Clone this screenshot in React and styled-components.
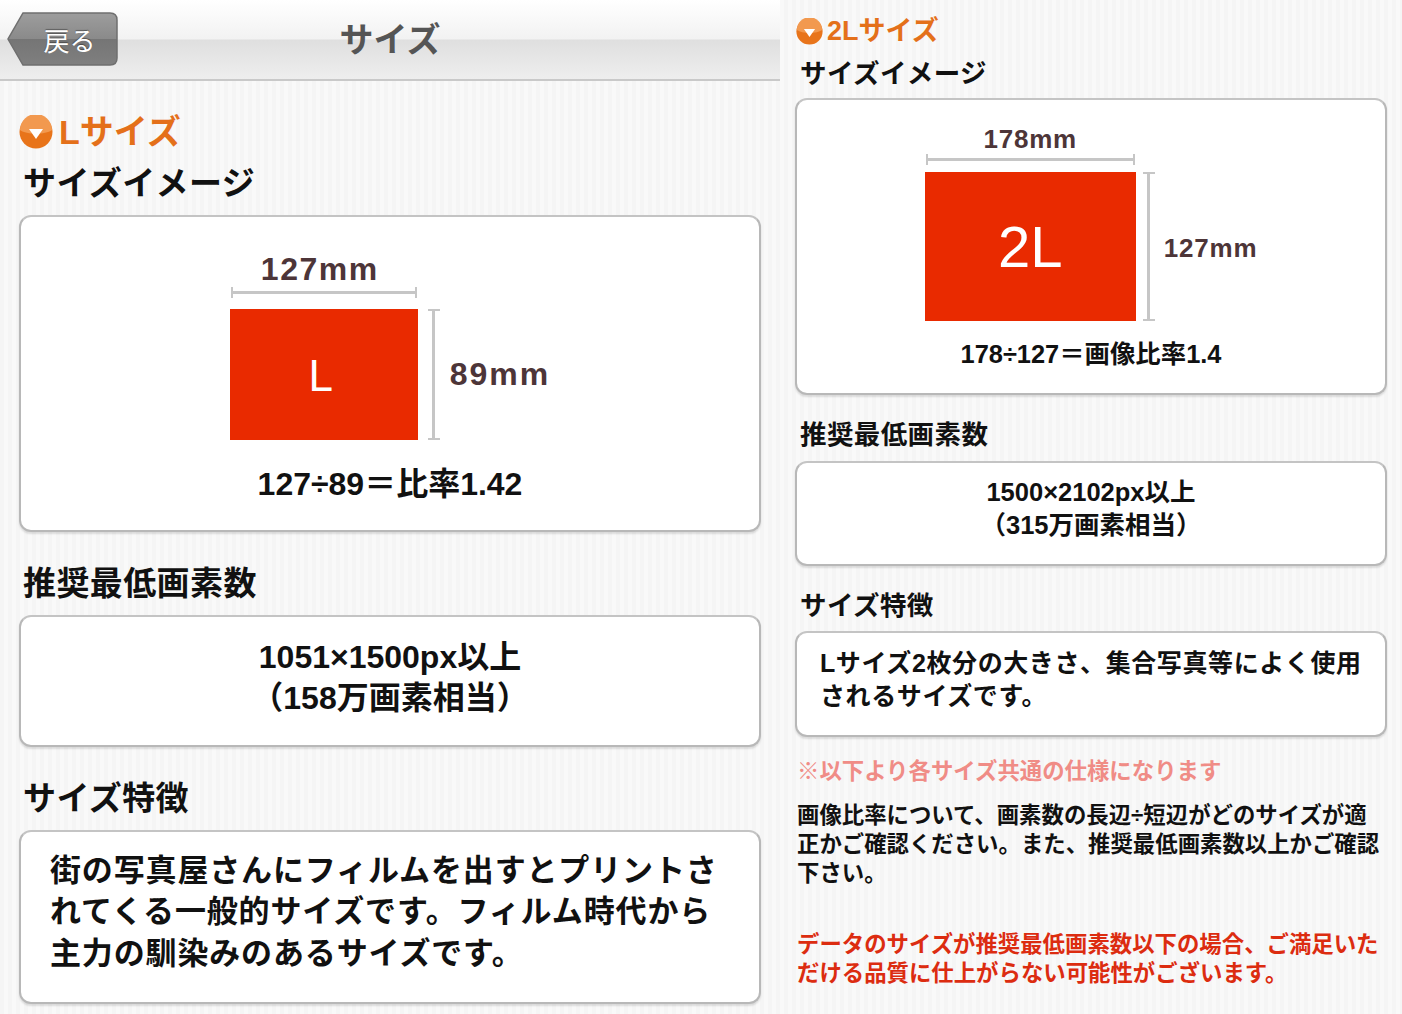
import React from "react";
import styled, { createGlobalStyle } from "styled-components";

const FONT = '"Liberation Sans", "Noto Sans CJK JP", sans-serif';

const GlobalStyle = createGlobalStyle`
  html, body {
    margin: 0;
    padding: 0;
    background: #f7f7f7;
  }
  body {
    font-family: ${FONT};
    color: #111;
  }
`;

const Page = styled.div`
  display: grid;
  grid-template-columns: 780px 622px;
  width: 1402px;
  height: 1014px;
  overflow: hidden;
  background: repeating-linear-gradient(90deg, #f5f5f5 0 4px, #f9f9f9 4px 8px);
`;

const Column = styled.div`
  display: flex;
  flex-direction: column;
  min-width: 0;
`;

const Header = styled.header`
  display: grid;
  grid-template-columns: 1fr auto 1fr;
  align-items: center;
  height: 81px;
  box-sizing: border-box;
  border-bottom: 2px solid #c9c9c9;
  background: linear-gradient(180deg, #ffffff 0, #f2f2f2 39px, #dfdfdf 40px, #eeeeee 79px);
`;

const BackButton = styled.div`
  position: relative;
  width: 111px;
  height: 54px;
  margin: 0 0 1px 7px;
  display: flex;
  align-items: center;
  justify-content: center;
  padding-left: 14px;
  box-sizing: border-box;
  color: #fff;
  font-size: 26px;
  font-weight: 400;
  text-shadow: 0 -1px 1px rgba(0, 0, 0, 0.4);

  svg {
    position: absolute;
    inset: 0;
  }
  span {
    position: relative;
  }
`;

const HeaderTitle = styled.h1`
  margin: 1px 0 0;
  font-size: 34px;
  font-weight: 700;
  line-height: 40px;
  color: #555;
`;

const Body = styled.div`
  display: flex;
  flex-direction: column;
  padding: ${(p) => (p.$small ? "15px 15px 0" : "33px 19px 0")};
`;

const SizeTitle = styled.h2`
  display: flex;
  align-items: center;
  gap: ${(p) => (p.$small ? "4px" : "6px")};
  margin: 0 0 0 ${(p) => (p.$small ? "1px" : "0")};
  height: ${(p) => (p.$small ? "32px" : "36px")};
  font-size: ${(p) => (p.$small ? "27px" : "34px")};
  font-weight: 700;
  line-height: 1;
  color: #e4701a;
`;

const Label = styled.h3`
  margin: ${(p) => p.$top} 0 ${(p) => p.$bottom} ${(p) => (p.$small ? "5px" : "4px")};
  height: ${(p) => (p.$small ? "36px" : "44px")};
  font-size: ${(p) => (p.$small ? "26.5px" : "33px")};
  line-height: ${(p) => (p.$small ? "36px" : "44px")};
  letter-spacing: 0.4px;
  font-weight: 700;
  color: #111;
  white-space: nowrap;
`;

const Card = styled.div`
  display: flex;
  flex-direction: column;
  align-items: center;
  justify-content: center;
  box-sizing: border-box;
  height: ${(p) => p.$height}px;
  background: #fff;
  border: 2px solid #b8b8b8;
  border-top-color: #c4c4c4;
  border-radius: 12px;
  box-shadow: 0 2px 2px rgba(0, 0, 0, 0.12);
`;

const CenterText = styled.div`
  text-align: center;
  font-weight: 700;
  white-space: nowrap;
  padding-bottom: ${(p) => (p.$small ? "10px" : "6px")};
  font-size: ${(p) => (p.$small ? "25.5px" : "32px")};
  line-height: ${(p) => (p.$small ? "33px" : "41px")};
`;

const FeatureText = styled.div`
  align-self: flex-start;
  font-weight: 700;
  white-space: nowrap;
  padding-left: ${(p) => (p.$small ? "23px" : "29px")};
  padding-bottom: ${(p) => (p.$small ? "8px" : "10px")};
  font-size: ${(p) => (p.$small ? "25px" : "31px")};
  line-height: ${(p) => (p.$small ? "33px" : "41.5px")};
  letter-spacing: ${(p) => (p.$small ? "0.6px" : "0.85px")};
`;

const Diagram = styled.div`
  display: grid;
  grid-template-columns: ${(p) => p.$w}px auto auto;
  grid-template-rows: auto auto ${(p) => p.$h}px;
  column-gap: ${(p) => (p.$small ? "7px" : "10px")};
  margin-top: ${(p) => (p.$small ? "2px" : "10px")};
`;

const WidthLabel = styled.div`
  grid-column: 1;
  justify-self: center;
  margin-right: ${(p) => (p.$small ? "0" : "8px")};
  font-weight: 700;
  color: #4d3538;
  font-size: ${(p) => (p.$small ? "26px" : "32px")};
  letter-spacing: ${(p) => (p.$small ? "0.8px" : "1.5px")};
  line-height: ${(p) => (p.$small ? "30px" : "36px")};
`;

const WidthBracket = styled.div`
  grid-column: 1;
  grid-row: 2;
  box-sizing: border-box;
  height: 11px;
  margin: 0 1px ${(p) => (p.$small ? "7px" : "11px")};
  border: solid #c6c6c6;
  border-width: 0 2px;
  position: relative;

  &::after {
    content: "";
    position: absolute;
    left: 0;
    right: 0;
    top: 4px;
    height: 3px;
    background: #c6c6c6;
  }
`;

const Photo = styled.div`
  grid-column: 1;
  grid-row: 3;
  display: flex;
  align-items: center;
  justify-content: center;
  padding: ${(p) => (p.$small ? "0" : "4px 6px 0 0")};
  background: #e92a00;
  color: #fff;
  font-size: ${(p) => (p.$small ? "58px" : "44px")};
  font-weight: 400;
`;

const HeightBracket = styled.div`
  grid-column: 2;
  grid-row: 3;
  position: relative;
  box-sizing: border-box;
  width: 12px;
  border: solid #c6c6c6;
  border-width: 2px 0;

  &::after {
    content: "";
    position: absolute;
    left: 4px;
    top: 0;
    bottom: 0;
    width: 3px;
    background: #c6c6c6;
  }
`;

const HeightLabel = styled.div`
  grid-column: 3;
  grid-row: 3;
  align-self: center;
  padding: ${(p) => (p.$small ? "3px 0 0 2px" : "0")};
  font-weight: 700;
  color: #4d3538;
  font-size: ${(p) => (p.$small ? "26px" : "32px")};
  letter-spacing: ${(p) => (p.$small ? "0.8px" : "2px")};
  white-space: nowrap;
`;

const RatioText = styled.div`
  font-weight: 700;
  white-space: nowrap;
  margin-top: ${(p) => (p.$small ? "16px" : "21px")};
  font-size: ${(p) => (p.$small ? "25.4px" : "32px")};
  line-height: ${(p) => (p.$small ? "34px" : "46px")};
`;

const Note = styled.p`
  margin: ${(p) => p.$top} 0 0 2px;
  font-size: 22.4px;
  font-weight: 700;
  line-height: 29px;
  white-space: nowrap;
  color: ${(p) => p.$color || "#111"};
`;

const ArrowIcon = ({ size }) => (
  <svg width={size} height={size} viewBox="0 0 34 34" aria-hidden="true">
    <circle cx="17" cy="17" r="16.5" fill="#e8741a" />
    <path d="M1 15A16 16 0 0 1 33 15C26 20 8 20 1 15Z" fill="#f2994f" />
    <path d="M10 14H24L17 24Z" fill="#fff" />
  </svg>
);

const BackShape = () => (
  <svg width="111" height="54" viewBox="0 0 111 54" aria-hidden="true">
    <defs>
      <linearGradient id="backFill" x1="0" y1="0" x2="0" y2="1">
        <stop offset="0" stopColor="#9d9d9d" />
        <stop offset="0.5" stopColor="#8a8a8a" />
        <stop offset="0.5" stopColor="#757575" />
        <stop offset="1" stopColor="#7f7f7f" />
      </linearGradient>
    </defs>
    <path
      d="M16 1H103Q110 1 110 8V46Q110 53 103 53H16L1 27Z"
      fill="url(#backFill)"
      stroke="#6f6f6f"
      strokeWidth="1.5"
    />
  </svg>
);

const SizeDiagram = ({ small, w, h, width, height, name }) => (
  <Diagram $small={small} $w={w} $h={h}>
    <WidthLabel $small={small}>{width}</WidthLabel>
    <WidthBracket $small={small} />
    <Photo $small={small}>{name}</Photo>
    <HeightBracket />
    <HeightLabel $small={small}>{height}</HeightLabel>
  </Diagram>
);

export default function App() {
  return (
    <>
      <GlobalStyle />
      <Page>
        <Column>
          <Header>
            <BackButton>
              <BackShape />
              <span>戻る</span>
            </BackButton>
            <HeaderTitle>サイズ</HeaderTitle>
          </Header>
          <Body>
            <SizeTitle>
              <ArrowIcon size={34} />
              Lサイズ
            </SizeTitle>
            <Label $top="12px" $bottom="9px">サイズイメージ</Label>
            <Card $height={317}>
              <SizeDiagram w={188} h={131} width="127mm" height="89mm" name="L" />
              <RatioText>127÷89＝比率1.42</RatioText>
            </Card>
            <Label $top="30px" $bottom="9px">推奨最低画素数</Label>
            <Card $height={132}>
              <CenterText>
                1051×1500px以上
                <br />
                （158万画素相当）
              </CenterText>
            </Card>
            <Label $top="30px" $bottom="9px">サイズ特徴</Label>
            <Card $height={174}>
              <FeatureText>
                街の写真屋さんにフィルムを出すとプリントさ
                <br />
                れてくる一般的サイズです。フィルム時代から
                <br />
                主力の馴染みのあるサイズです。
              </FeatureText>
            </Card>
          </Body>
        </Column>
        <Column>
          <Body $small>
            <SizeTitle $small>
              <ArrowIcon size={27} />
              2Lサイズ
            </SizeTitle>
            <Label $small $top="9px" $bottom="6px">サイズイメージ</Label>
            <Card $height={297}>
              <SizeDiagram small w={211} h={149} width="178mm" height="127mm" name="2L" />
              <RatioText $small>178÷127＝画像比率1.4</RatioText>
            </Card>
            <Label $small $top="22px" $bottom="8px">推奨最低画素数</Label>
            <Card $height={105}>
              <CenterText $small>
                1500×2102px以上
                <br />
                （315万画素相当）
              </CenterText>
            </Card>
            <Label $small $top="22px" $bottom="7px">サイズ特徴</Label>
            <Card $height={106}>
              <FeatureText $small>
                Lサイズ2枚分の大きさ、集合写真等によく使用
                <br />
                されるサイズです。
              </FeatureText>
            </Card>
            <Note $top="20px" $color="#f08c86">※以下より各サイズ共通の仕様になります</Note>
            <Note $top="15px">
              画像比率について、画素数の長辺÷短辺がどのサイズが適
              <br />
              正かご確認ください。また、推奨最低画素数以上かご確認
              <br />
              下さい。
            </Note>
            <Note $top="42px" $color="#dc2c10">
              データのサイズが推奨最低画素数以下の場合、ご満足いた
              <br />
              だける品質に仕上がらない可能性がございます。
            </Note>
          </Body>
        </Column>
      </Page>
    </>
  );
}
